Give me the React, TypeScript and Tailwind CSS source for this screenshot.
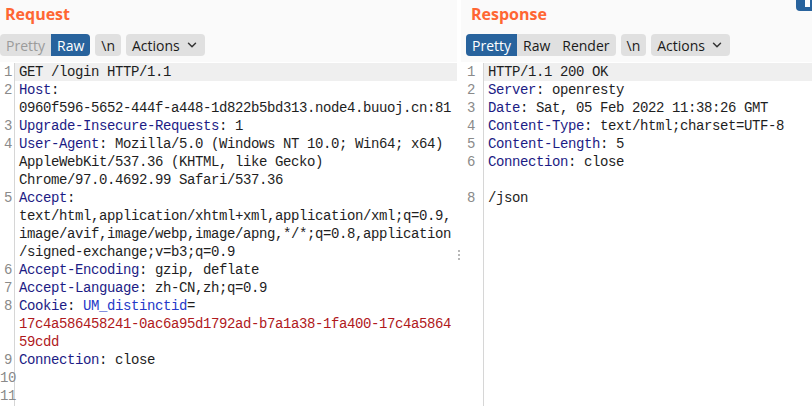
import React from "react";
import { ChevronDown } from "lucide-react";

type Seg = { t: string; c?: "k" | "v" | "n" | "r" };
type Row = { n?: string; segs: Seg[]; hl?: boolean };

const K = (t: string): Seg => ({ t, c: "k" });
const V = (t: string): Seg => ({ t, c: "v" });

const reqRows: Row[] = [
  { n: "1", segs: [V("GET /login HTTP/1.1")], hl: true },
  { n: "2", segs: [K("Host"), V(":")] },
  { segs: [V("0960f596-5652-444f-a448-1d822b5bd313.node4.buuoj.cn:81")] },
  { n: "3", segs: [K("Upgrade-Insecure-Requests"), V(": 1")] },
  { n: "4", segs: [K("User-Agent"), V(": Mozilla/5.0 (Windows NT 10.0; Win64; x64)")] },
  { segs: [V("AppleWebKit/537.36 (KHTML, like Gecko)")] },
  { segs: [V("Chrome/97.0.4692.99 Safari/537.36")] },
  { n: "5", segs: [K("Accept"), V(":")] },
  { segs: [V("text/html,application/xhtml+xml,application/xml;q=0.9,")] },
  { segs: [V("image/avif,image/webp,image/apng,*/*;q=0.8,application")] },
  { segs: [V("/signed-exchange;v=b3;q=0.9")] },
  { n: "6", segs: [K("Accept-Encoding"), V(": gzip, deflate")] },
  { n: "7", segs: [K("Accept-Language"), V(": zh-CN,zh;q=0.9")] },
  { n: "8", segs: [K("Cookie"), V(": "), { t: "UM_distinctid", c: "n" }, V("=")] },
  { segs: [{ t: "17c4a586458241-0ac6a95d1792ad-b7a1a38-1fa400-17c4a5864", c: "r" }] },
  { segs: [{ t: "59cdd", c: "r" }] },
  { n: "9", segs: [K("Connection"), V(": close")] },
  { n: "10", segs: [] },
  { n: "11", segs: [] },
];

const resRows: Row[] = [
  { n: "1", segs: [V("HTTP/1.1 200 OK")], hl: true },
  { n: "2", segs: [K("Server"), V(": openresty")] },
  { n: "3", segs: [K("Date"), V(": Sat, 05 Feb 2022 11:38:26 GMT")] },
  { n: "4", segs: [K("Content-Type"), V(": text/html;charset=UTF-8")] },
  { n: "5", segs: [K("Content-Length"), V(": 5")] },
  { n: "6", segs: [K("Connection"), V(": close")] },
  { segs: [] },
  { n: "8", segs: [V("/json")] },
];

const colorOf = (c?: string) =>
  c === "k"
    ? "text-[#1c1c85]"
    : c === "n"
    ? "text-[#2438c8]"
    : c === "r"
    ? "text-[#b0191c]"
    : "text-[#1e1e1e]";

const mono = { fontFamily: '"Liberation Mono", "DejaVu Sans Mono", monospace' };

function Editor({ rows, gutterW, numPr }: { rows: Row[]; gutterW: string; numPr: string }) {
  return (
    <div className="flex flex-1 bg-white pt-px" style={mono}>
      <div className={`${gutterW} shrink-0 border-r border-[#d6d6d6] flex flex-col`}>
        {rows.map((r, i) => (
          <div
            key={i}
            className={`h-[18px] leading-[18px] text-right text-[14px] tracking-[-0.4px] text-[#8a8a8a] ${numPr}`}
          >
            {r.n ?? ""}
          </div>
        ))}
      </div>
      <div className="flex-1 flex flex-col">
        {rows.map((r, i) => (
          <div
            key={i}
            className={`h-[18px] leading-[18px] pl-[4px] text-[14px] tracking-[-0.4px] whitespace-pre ${
              r.hl ? "bg-[#efefef]" : ""
            }`}
          >
            {r.segs.map((s, j) => (
              <span key={j} className={colorOf(s.c)}>
                {s.t}
              </span>
            ))}
          </div>
        ))}
      </div>
    </div>
  );
}

const ui = { fontFamily: '"Open Sans", "Noto Sans", sans-serif' };

function Btn({ children, cls }: { children: React.ReactNode; cls?: string }) {
  return (
    <div
      className={`h-[22px] flex items-center px-[6px] rounded-[4px] bg-[#e0e0e0] text-[14px] text-[#1a1a1a] ${cls ?? ""}`}
    >
      {children}
    </div>
  );
}

function Header({
  title,
  tabs,
  active,
  disabled,
  padL,
}: {
  title: string;
  tabs: string[];
  active: number;
  disabled?: number;
  padL: string;
}) {
  return (
    <div className="h-[62px] bg-[#fafafa] flex flex-col" style={ui}>
      <div className={`h-[31px] pt-[1px] ${padL} text-[16px] font-bold text-[#ff6633] leading-[26px]`}>
        {title}
      </div>
      <div className={`flex items-center mt-[3px] gap-[5px] ${padL === "pl-[5px]" ? "pl-0" : "pl-[5px]"}`}>
        <div className="flex h-[22px] rounded-[4px] overflow-hidden bg-[#e0e0e0]">
          {tabs.map((t, i) => (
            <div
              key={t}
              className={`h-[22px] flex items-center px-[6px] text-[14px] ${
                i === active
                  ? "bg-[#28639d] text-white"
                  : i === disabled
                  ? "text-[#9b9b9b]"
                  : "text-[#1a1a1a]"
              }`}
            >
              {t}
            </div>
          ))}
        </div>
        <Btn>\n</Btn>
        <Btn cls="gap-[5px]">
          <span>Actions</span>
          <ChevronDown size={14} strokeWidth={2.5} className="text-[#333]" />
        </Btn>
      </div>
    </div>
  );
}

export default function App() {
  return (
    <div className="w-[812px] h-[406px] overflow-hidden flex bg-white relative">
      <div className="w-[457px] shrink-0 flex flex-col">
        <Header title="Request" tabs={["Pretty", "Raw"]} active={1} disabled={0} padL="pl-[5px]" />
        <Editor rows={reqRows} gutterW="w-[15px]" numPr="pr-[2px]" />
      </div>
      <div className="w-[4px] shrink-0 bg-white relative">
        <div className="absolute left-[1px] top-[250px] flex flex-col gap-[2px]">
          <div className="w-[2px] h-[2px] bg-[#b8b8b8]" />
          <div className="w-[2px] h-[2px] bg-[#b8b8b8]" />
          <div className="w-[2px] h-[2px] bg-[#b8b8b8]" />
        </div>
      </div>
      <div className="flex-1 flex flex-col bg-white">
        <Header title="Response" tabs={["Pretty", "Raw", "Render"]} active={0} padL="pl-[10px]" />
        <Editor rows={resRows} gutterW="w-[23px]" numPr="pr-[8px]" />
      </div>
      <div className="absolute right-0 top-0 w-[16px] h-[11px] rounded-bl-[4px] bg-[#28639d] flex justify-end">
        <div className="w-[5px] h-[7px] bg-white mt-0 mr-[2px]" />
      </div>
    </div>
  );
}
